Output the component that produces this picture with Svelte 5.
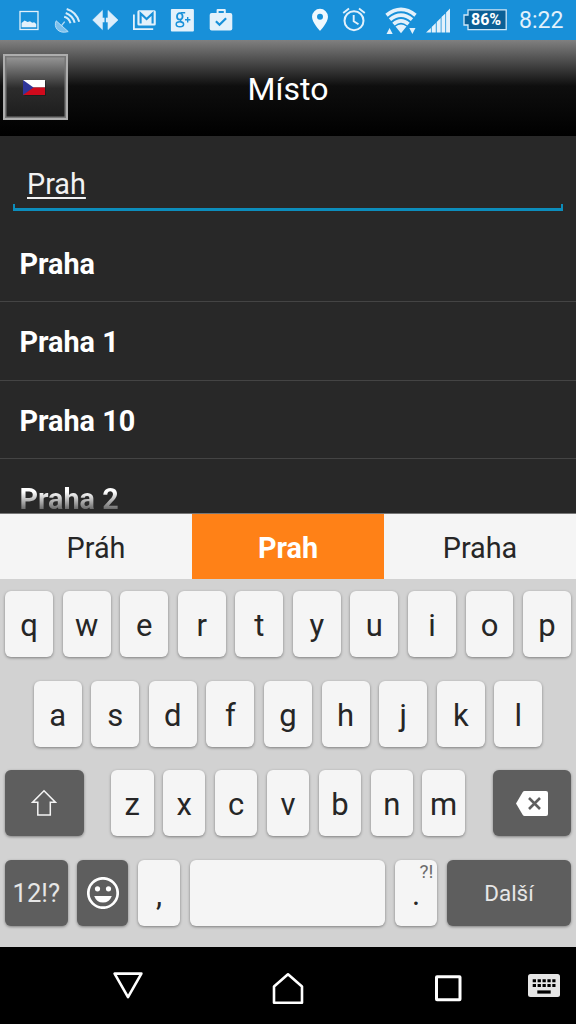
<!--
Component: App.svelte
Description: Place search screen with a list of matching places and an on-screen keyboard.
Internal Variables:
  - query (string): Text typed in the search field.
  - places (array): Places matching the query.
  - suggestions (array): Word suggestions shown above the keyboard.
-->
<script>
  let query = 'Prah';
  let places = ['Praha', 'Praha 1', 'Praha 10', 'Praha 2'];
  let suggestions = ['Práh', 'Prah', 'Praha'];

  const topRow = 'qwertyuiop'.split('');
  const middleRow = 'asdfghjkl'.split('');
  const bottomRow = 'zxcvbnm'.split('');

  function typeKey(key) {
    query = query + key;
  }

  function eraseKey() {
    query = query.slice(0, -1);
  }
</script>

<div class="screen">
  <div class="status">
    <!-- Notifications -->
    <svg class="note" viewBox="-19.2 -20 38.4 40">
      <rect x="-9.2" y="-8.5" width="18" height="18" fill="none" stroke="#e3f1fb" stroke-width="1.3" />
      <path d="M-7.6 7.2V3l3-2.6 3 1.6 2.4-.8 2.2 1.6 2-.6L7 4v3.2z" fill="#e3f1fb" />
    </svg>
    <svg class="note" viewBox="-19.2 -20 38.4 40">
      <path d="M-11 .8C-14 7-9 14.500 1 11.600Z" fill="#7cc0ec" stroke="#b6dcf5" />
      <path d="M-6 6 -2.500 1.600" stroke="#b6dcf5" stroke-width="1.300" />
      <path d="M-3-3.300Q2-2 3.300 3.300M-1.500-7Q5.500-4.500 7.500 2.700M-.5-11Q9-8 12 1.700" fill="none" stroke="#d6ecfa" stroke-width="2" />
    </svg>
    <svg class="note" viewBox="-19.2 -20 38.4 40">
      <path d="M-12.500 0-2.800-9.600V-2H2.800V-9.600L12.800 0 2.800 9.600V2H-2.800V9.600Z" fill="#dceefb" stroke="#dceefb" stroke-width=".6" />
      <path d="M0-9.500V9.500" stroke="#1890d9" stroke-width="1.400" />
    </svg>
    <svg class="note" viewBox="-19.2 -20 38.4 40">
      <path d="M-10.300-5.500V9.200H9" fill="none" stroke="#e3f1fb" stroke-width="1.800" />
      <rect x="-6.800" y="-9.800" width="18.400" height="15.400" rx="1.500" fill="#e3f1fb" />
      <path d="M-3.600 3.500V-6.500L2.400-1 8.400-6.500V3.500" fill="none" stroke="#1890d9" stroke-width="2.100" />
    </svg>
    <svg class="note" viewBox="-19.2 -20 38.4 40">
      <rect x="-11.300" y="-11" width="23" height="22.600" rx="1" fill="#e3f1fb" />
      <ellipse cx="-2.400" cy="-3.600" rx="2.800" ry="3.200" fill="none" stroke="#1890d9" stroke-width="1.800" />
      <path d="M-1.500-7.300H3M-1.200 0C-2.500 1.200-.8 2 .6 3" fill="none" stroke="#1890d9" stroke-width="1.400" />
      <ellipse cx="-2.300" cy="4.300" rx="3.700" ry="2.500" fill="none" stroke="#1890d9" stroke-width="1.500" />
      <path d="M5.500-2.900V2.500M2.800-.2H8.200" stroke="#1890d9" stroke-width="1.400" />
    </svg>
    <svg class="note" viewBox="-19.2 -20 38.4 40">
      <path d="M-3.600-6V-10H3.600V-6" fill="none" stroke="#e3f1fb" stroke-width="2" stroke-linejoin="round" />
      <rect x="-11.500" y="-7" width="22.600" height="17.500" rx="2" fill="#e3f1fb" />
      <path d="M-5.300 1.300-1.700 4.800 4.900-1.800" fill="none" stroke="#1890d9" stroke-width="2.200" />
    </svg>

    <!-- System indicators -->
    <div class="system">
      <svg width="18" height="40" viewBox="0 0 18 40">
        <path d="M9 8.800A8 8 0 0 0 1 16.800C1 22.700 9 31 9 31S17 22.700 17 16.800A8 8 0 0 0 9 8.800Z" fill="#eff8fe" />
        <circle cx="9" cy="16.800" r="3" fill="#1890d9" />
      </svg>
      <svg class="alarm" width="24" height="40" viewBox="0 0 24 40">
        <circle cx="12" cy="20.700" r="9.500" fill="none" stroke="#e3f1fb" stroke-width="2" />
        <path d="M11.700 15V21.200L16.500 24.200M1.200 13 7 8.600M22.800 13 17 8.600" fill="none" stroke="#e3f1fb" stroke-width="1.900" />
      </svg>
      <svg class="wifi" width="34" height="40" viewBox="384 0 34 40">
        <path d="M386.500 15.200Q401 3.500 415.500 15.200M390 19.700Q401 10.500 412 19.700M393.500 24.100Q401 17.600 408.500 24.100" fill="none" stroke="#e3f1fb" stroke-width="3.700" />
        <path d="M395.500 26.600Q401 22.200 406.500 26.600L401 33.300Z" fill="#e3f1fb" />
        <path d="M386.500 34 389.600 28 392.700 34ZM409.300 28H415.500L412.400 34Z" fill="#e3f1fb" />
      </svg>
      <svg class="signal" width="26" height="40" viewBox="426 0 26 40">
        <path d="M426 32.600 430.900 28V32.600ZM431.700 27 435.800 23V32.600H431.700ZM436.700 22 440.700 18V32.600H436.700ZM441.500 17 445.300 13.400V32.600H441.500ZM446.100 12.600 450 8.600V32.600H446.100Z" fill="#e3f1fb" />
      </svg>
      <div class="battery">
        <svg width="44" height="22" viewBox="0 0 44 22">
          <path d="M5 .8H43.200V20.600H5V16H1V6H5Z" fill="#0b6096" stroke="#cfe8f9" stroke-width="1.300" />
        </svg>
        <span>86%</span>
      </div>
      <span class="clock">8:22</span>
    </div>
  </div>

  <header>
    <button class="language" aria-label="Čeština">
      <svg width="24" height="17" viewBox="0 0 24 17">
        <path d="M1.500 1H23V16H1.500Z" fill="#111" opacity=".45" />
        <path d="M0 0H22V7.500H0Z" fill="#fff" />
        <path d="M0 7.500H22V15H0Z" fill="#d00a1c" />
        <path d="M0 0 10.500 7.500 0 15Z" fill="#2f369a" />
      </svg>
    </button>
    <h1>Místo</h1>
  </header>

  <main>
    <div class="field"><span>{query}</span></div>
    <ul>
      {#each places as place, i}
        <li class:fading={i === places.length - 1}><span>{place}</span></li>
      {/each}
    </ul>
  </main>

  <div class="suggestions">
    {#each suggestions as word}
      <button class:active={word === query} on:click={() => (query = word)}>{word}</button>
    {/each}
  </div>

  <div class="keyboard">
    <div class="row">
      {#each topRow as key}
        <button class="key" on:click={() => typeKey(key)}>{key}</button>
      {/each}
    </div>
    <div class="row middle">
      {#each middleRow as key}
        <button class="key" on:click={() => typeKey(key)}>{key}</button>
      {/each}
    </div>
    <div class="row bottom">
      <button class="key dark shift" aria-label="Shift">
        <svg width="26" height="28" viewBox="0 0 26 28">
          <path d="M13 1.700 24.300 13.200H19.300V26H6.800V13.200H1.700Z" fill="none" stroke="#f4f4f4" stroke-width="1.500" />
        </svg>
      </button>
      <div class="letters">
        {#each bottomRow as key}
          <button class="key" on:click={() => typeKey(key)}>{key}</button>
        {/each}
      </div>
      <button class="key dark erase" aria-label="Backspace" on:click={eraseKey}>
        <svg width="32" height="25" viewBox="0 0 32 25">
          <path d="M8.500 0H30Q32 0 32 2V23Q32 25 30 25H8.500Q7.500 25 6.800 24L0 12.500 6.800 1Q7.500 0 8.500 0Z" fill="#fff" />
          <path d="M13 7 24 18M24 7 13 18" stroke="#5e5e5e" stroke-width="2.600" />
        </svg>
      </button>
    </div>
    <div class="row">
      <button class="key dark symbols">12!?</button>
      <button class="key dark emoji" aria-label="Emoji">
        <svg width="32" height="32" viewBox="0 0 32 32">
          <circle cx="16" cy="16" r="14.700" fill="none" stroke="#fff" stroke-width="2.700" />
          <circle cx="10.500" cy="11.800" r="2.600" fill="#fff" />
          <circle cx="21.500" cy="11.800" r="2.600" fill="#fff" />
          <path d="M7.200 19H24.800Q22.500 25.600 16 25.600T7.200 19Z" fill="#fff" />
        </svg>
      </button>
      <button class="key small" on:click={() => typeKey(',')}>,</button>
      <button class="key space" aria-label="Space" on:click={() => typeKey(' ')}></button>
      <button class="key small" on:click={() => typeKey('.')}>.<span class="hint">?!</span></button>
      <button class="key dark next">Další</button>
    </div>
  </div>

  <nav>
    <svg class="back" width="32" height="34" viewBox="112 968 32 34">
      <path d="M114.600 973.600H141.400L128 997.200Z" fill="none" stroke="#fff" stroke-width="2.600" stroke-linejoin="round" />
    </svg>
    <svg width="34" height="34" viewBox="271 970 34 34">
      <path d="M274 1001.800V985.600L288 973.300 302 985.600V1001.800Z" fill="none" stroke="#fff" stroke-width="2.600" stroke-linejoin="round" />
    </svg>
    <svg width="30" height="30" viewBox="433 973 30 30">
      <rect x="436.500" y="976.700" width="23.500" height="23" rx=".5" fill="none" stroke="#fff" stroke-width="3" />
    </svg>
    <svg class="switcher" width="32" height="23" viewBox="0 0 32 23">
      <rect width="32" height="23" rx="2.500" fill="#e6e6e6" />
      <path d="M4.700 6.700H27.500M4.700 11.500H27.500" stroke="#000" stroke-width="3" stroke-dasharray="3.300 1.600" />
      <path d="M9.300 18H22.700" stroke="#000" stroke-width="3.200" />
    </svg>
  </nav>
</div>

<style>
  :global(body) {
    background: #000;
  }

  .screen {
    width: 576px;
    height: 1024px;
    display: flex;
    flex-direction: column;
    overflow: hidden;
    font-family: Roboto, 'Liberation Sans', sans-serif;
    color: #fff;
  }

  button {
    font: inherit;
    color: inherit;
    border: none;
    padding: 0;
    margin: 0;
  }

  svg {
    display: block;
    flex: none;
  }

  .status {
    height: 40px;
    flex: none;
    display: flex;
    padding-left: 9.6px;
    background: #1890d9;
  }

  .note {
    width: 38.4px;
    height: 40px;
  }

  .system {
    display: flex;
    align-items: center;
    margin-left: auto;
    padding-right: 12px;
    color: #e3f1fb;
  }

  .alarm {
    margin-left: 12.5px;
  }

  .wifi {
    margin-left: 18.5px;
  }

  .signal {
    margin-left: 8px;
  }

  .battery {
    display: grid;
    margin-left: 11px;
    font-size: 16px;
    font-weight: 700;
    line-height: 22px;
    color: #fff;
  }

  .battery svg,
  .battery span {
    grid-area: 1 / 1;
  }

  .battery span {
    padding-left: 8px;
  }

  .clock {
    width: 45px;
    margin-left: 12px;
    font-size: 23px;
    line-height: 40px;
    white-space: nowrap;
    padding-top: 2px;
  }

  header {
    height: 96px;
    flex: none;
    display: grid;
    grid-template-columns: 67px 1fr 67px;
    background: linear-gradient(#808080, #0e0e0e 48%, #000);
  }

  .language {
    width: 64.5px;
    height: 66px;
    margin: 14.4px 0 0 3px;
    padding-top: 2px;
    display: flex;
    align-items: center;
    justify-content: center;
    background: linear-gradient(#999, #2c2c2c 52%, #1d1d1d);
    border: 2px solid #adadad;
    box-shadow: inset 0 0 0 1.5px #777;
  }

  h1 {
    margin: 0;
    font-size: 32px;
    font-weight: 400;
    line-height: 99px;
    text-align: center;
  }

  main {
    flex: 1;
    min-height: 0;
    background: #282828;
  }

  .field {
    height: 53px;
    margin: 22px 13px 0;
    padding: 0 12px;
    display: flex;
    align-items: flex-start;
    font-size: 28.8px;
    line-height: 52px;
    color: #f3f3f3;
    /* Only the last few pixels of the side borders are drawn */
    border: 2px solid;
    border-width: 0 2px 3px;
    border-image: linear-gradient(transparent 46px, #0c8dbc 46px) 0 2 3;
    box-sizing: border-box;
  }

  .field span {
    text-decoration: underline;
    text-decoration-thickness: 1.5px;
    text-underline-offset: 3px;
  }

  ul {
    margin: 13px 0 0;
    padding: 0;
    list-style: none;
  }

  li {
    height: 78.4px;
    box-sizing: border-box;
    padding: 0 19.4px;
    border-bottom: 1px solid #444;
    font-size: 28.8px;
    font-weight: 700;
    line-height: 81px;
  }

  .fading {
    height: 54px;
    padding-top: 25.5px;
    border: none;
    line-height: 29px;
  }

  .fading span {
    display: inline-block;
    height: 28px;
    background: linear-gradient(#fff 25%, #555 95%);
    background-clip: text;
    color: transparent;
  }

  .suggestions {
    height: 66px;
    flex: none;
    box-sizing: border-box;
    display: grid;
    grid-template-columns: repeat(3, 1fr);
    background: #f5f5f5;
    border-top: 1px solid #777;
    color: #262626;
  }

  .suggestions button {
    background: none;
    font-size: 28.8px;
    padding-top: 2px;
  }

  .suggestions .active {
    background: #ff8117;
    color: #fff;
    font-weight: 700;
  }

  .keyboard {
    height: 368px;
    flex: none;
    box-sizing: border-box;
    padding: 12px 5px 0;
    display: flex;
    flex-direction: column;
    gap: 23.5px;
    background: #d2d2d2;
  }

  .row {
    display: flex;
    gap: 9.6px;
  }

  .middle {
    padding: 0 28.6px;
  }

  .key {
    flex: 1;
    height: 66px;
    border-radius: 6px;
    background: #f5f5f5;
    box-shadow: 0 1px 3px rgba(0, 0, 0, 0.4);
    color: #262626;
    font-size: 31px;
    padding-top: 3px;
    position: relative;
  }

  .dark {
    display: flex;
    align-items: center;
    justify-content: center;
    background: #5e5e5e;
    color: #e6e6e6;
    padding: 0;
  }

  .bottom {
    justify-content: space-between;
    gap: 0;
  }

  .letters {
    width: 354px;
    display: flex;
    gap: 9.4px;
  }

  .shift,
  .erase {
    flex: 0 0 78.5px;
  }

  .symbols {
    flex: 0 0 62.5px;
    font-size: 25.6px;
  }

  .emoji {
    flex: 0 0 51px;
  }

  .small {
    flex: 0 0 42.5px;
  }

  .next {
    flex: 0 0 124px;
    font-size: 22.4px;
  }

  .hint {
    position: absolute;
    top: 0;
    right: 4px;
    font-size: 19px;
    color: #6c6c6c;
  }

  nav {
    height: 77px;
    flex: none;
    display: grid;
    grid-template-columns: 48px 160px 160px 160px 48px;
    align-items: center;
    justify-items: center;
    background: #000;
  }

  nav svg {
    margin-top: 4px;
  }

  nav .back {
    grid-column: 2;
    margin-top: 0;
    margin-bottom: 2px;
  }

  nav .switcher {
    justify-self: start;
    margin-top: 0;
  }
</style>
